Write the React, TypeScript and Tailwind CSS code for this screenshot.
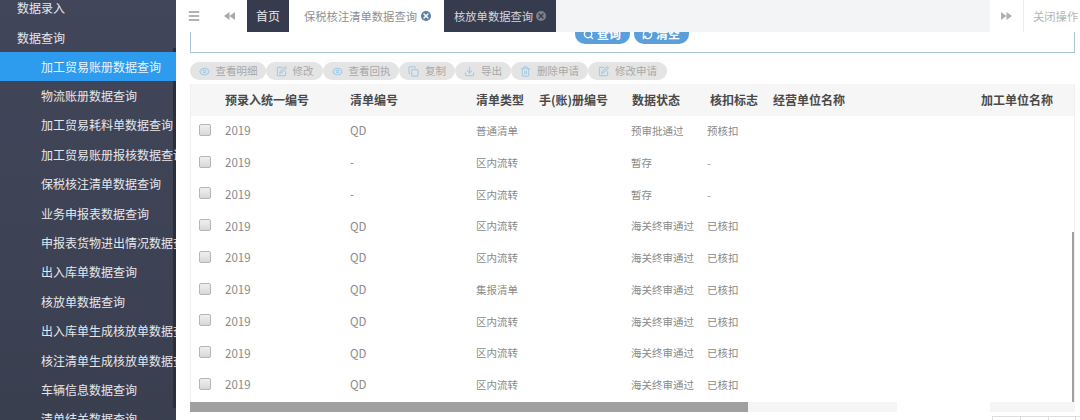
import { Copy, Download, Eye, Menu, RefreshCw, Search, SquarePen, Trash2, X } from "lucide-react";

const menu = [
  "加工贸易账册数据查询",
  "物流账册数据查询",
  "加工贸易耗料单数据查询",
  "加工贸易账册报核数据查询",
  "保税核注清单数据查询",
  "业务申报表数据查询",
  "申报表货物进出情况数据查询",
  "出入库单数据查询",
  "核放单数据查询",
  "出入库单生成核放单数据查询",
  "核注清单生成核放单数据查询",
  "车辆信息数据查询",
  "清单结关数据查询",
];

const tools = [
  { label: "查看明细", icon: Eye, w: "w-[76px]" },
  { label: "修改", icon: SquarePen, w: "w-[57px]" },
  { label: "查看回执", icon: Eye, w: "w-[76px]" },
  { label: "复制", icon: Copy, w: "w-[56px]" },
  { label: "导出", icon: Download, w: "w-[56px]" },
  { label: "删除申请", icon: Trash2, w: "w-[77px]" },
  { label: "修改申请", icon: SquarePen, w: "w-[79px]" },
];

const rows = [
  ["QD", "普通清单", "预审批通过", "预核扣"],
  ["-", "区内流转", "暂存", "-"],
  ["-", "区内流转", "暂存", "-"],
  ["QD", "区内流转", "海关终审通过", "已核扣"],
  ["QD", "区内流转", "海关终审通过", "已核扣"],
  ["QD", "集报清单", "海关终审通过", "已核扣"],
  ["QD", "区内流转", "海关终审通过", "已核扣"],
  ["QD", "区内流转", "海关终审通过", "已核扣"],
  ["QD", "区内流转", "海关终审通过", "已核扣"],
];

function Sidebar() {
  return (
    <aside className="relative w-[176px] h-[420px] shrink-0 overflow-hidden bg-gradient-to-b from-[#41465a] to-[#3a3f50] text-[12px] text-[#e6e7ea]">
      {/* thin scrollbar, the active row covers it */}
      <div className="absolute right-0 top-[48px] h-[360px] w-[3px] bg-[#2c2f3a]" />
      <div className="relative -mt-[7px]">
        <div className="h-[30px] pl-[17px] flex items-center whitespace-nowrap">数据录入</div>
        <div className="h-[29px] pl-[17px] flex items-center whitespace-nowrap">数据查询</div>
        {menu.map((item, i) => (
          <div
            key={item}
            className={`h-[29.4px] pl-[41px] flex items-center whitespace-nowrap ${i === 0 ? "bg-[#2d9bee] text-[#e8f4fd]" : ""}`}
          >
            {item}
          </div>
        ))}
      </div>
    </aside>
  );
}

function TabBar() {
  return (
    <div className="h-[32px] flex text-[11.3px] bg-white">
      <div className="w-[71px] flex items-center text-[#9a9a9a]">
        <Menu size={14} strokeWidth={2.5} className="ml-[11px]" />
        <svg viewBox="0 0 11 8" className="ml-[23px] w-[11px] h-[8px] text-[#a8a8a8]" fill="currentColor">
          <path d="M5.5 0v8L0 4zM11 0v8L5.5 4z" />
        </svg>
      </div>
      <div className="w-[42px] bg-[#363c4e] text-[12px] text-[#e8e9ec] flex items-center justify-center">首页</div>
      <div className="w-[155px] flex items-center pl-[15px] gap-[4px] text-[#8f8f8f] whitespace-nowrap">
        保税核注清单数据查询
        <span className="w-[10px] h-[10px] rounded-full bg-[#5d7fa6] flex items-center justify-center">
          <X size={8} strokeWidth={4} className="text-white" />
        </span>
      </div>
      <div className="w-[112px] bg-[#363c4e] text-[#d5d7dc] flex items-center pl-[10px] gap-[3px] whitespace-nowrap">
        核放单数据查询
        <span className="w-[10px] h-[10px] rounded-full bg-[#7b808c] flex items-center justify-center">
          <X size={8} strokeWidth={4} className="text-[#363c4e]" />
        </span>
      </div>
      <div className="w-[434px] bg-[#f3f4f6]" />
      <div className="w-[34px] flex items-center justify-center border-r border-[#eeeeee]">
        <svg viewBox="0 0 11 8" className="w-[11px] h-[8px] text-[#b0b0b0]" fill="currentColor">
          <path d="M0 0v8l5.5-4zM5.5 0v8L11 4z" />
        </svg>
      </div>
      <div className="flex-1 overflow-hidden pl-[9px] flex items-center text-[#b5b5b5] whitespace-nowrap">关闭操作</div>
    </div>
  );
}

function SearchPanel() {
  return (
    <div className="ml-[14px] mr-[5px] h-[21px] overflow-hidden border-x border-b border-[#a9c8d8] flex items-end justify-center gap-[4px] pb-[8px] pr-[2px] text-[12px] font-bold text-white">
      <div className="w-[55px] h-[20px] shrink-0 rounded-full bg-[#5a9fdc] flex items-center justify-center gap-[3px]">
        <Search size={11} strokeWidth={3} />
        查询
      </div>
      <div className="w-[55px] h-[20px] shrink-0 rounded-full bg-[#5a9fdc] flex items-center justify-center gap-[3px]">
        <RefreshCw size={11} strokeWidth={3} />
        清空
      </div>
    </div>
  );
}

function Toolbar() {
  return (
    <div className="ml-[14px] mt-[9px] h-[18px] flex text-[10.5px] text-[#a8a8a8]">
      {tools.map((t) => (
        <div key={t.label} className={`${t.w} h-[18px] rounded-full bg-[#e4e4e4] flex items-center justify-center gap-[6px] whitespace-nowrap`}>
          <t.icon size={11} strokeWidth={2.5} className="text-[#a5cde8]" />
          {t.label}
        </div>
      ))}
    </div>
  );
}

function Row({ cells }: { cells: string[] }) {
  return (
    <div className="h-[31.75px] pb-[2px] flex items-center text-[10.5px] text-[#8a8a8a] whitespace-nowrap">
      <div className="w-[34px] pl-[8px] -mt-[2px]">
        <div className="w-[12px] h-[12px] rounded-[2px] border border-[#b5b5b5] bg-gradient-to-b from-[#f0f0f0] to-[#d8d8d8]" />
      </div>
      <div className="w-[125px] text-[11.5px]">2019</div>
      <div className="w-[126px] text-[11.5px]">{cells[0]}</div>
      <div className="w-[155px]">{cells[1]}</div>
      <div className="w-[76px]">{cells[2]}</div>
      <div>{cells[3]}</div>
    </div>
  );
}

function DataTable() {
  return (
    <div className="relative ml-[14px] mr-[5px] mt-[4px] h-[318px] border-x border-[#f0f0f0]">
      <div className="h-[32px] flex items-center bg-[#f6f6f7] text-[12px] font-bold text-[#4a4a4a] whitespace-nowrap">
        <div className="w-[34px]" />
        <div className="w-[125px]">预录入统一编号</div>
        <div className="w-[126px]">清单编号</div>
        <div className="w-[63px]">清单类型</div>
        <div className="w-[93px]">手(账)册编号</div>
        <div className="w-[78px]">数据状态</div>
        <div className="w-[63px]">核扣标志</div>
        <div className="w-[208px]">经营单位名称</div>
        <div>加工单位名称</div>
      </div>
      {rows.map((r, i) => (
        <Row key={i} cells={r} />
      ))}
      {/* vertical scrollbar thumb */}
      <div className="absolute right-0 top-[148px] h-[170px] w-[2px] bg-[#a0a0a0]" />
    </div>
  );
}

function BottomBar() {
  return (
    <div className="ml-[14px] mr-[5px] h-[10px] flex">
      <div className="w-[558px] bg-[#a0a0a0]" />
      <div className="w-[149px] bg-[#f5f5f5]" />
      <div className="w-[93px]" />
      <div className="flex-1 bg-[#f5f5f5]" />
    </div>
  );
}

export default function App() {
  return (
    <div className="w-[1080px] h-[420px] flex overflow-hidden bg-white font-['Noto_Sans_CJK_SC','Liberation_Sans',sans-serif]">
      <Sidebar />
      <main className="flex-1 min-w-0">
        <TabBar />
        <SearchPanel />
        <Toolbar />
        <DataTable />
        <BottomBar />
        <div className="ml-[816px] mt-[4px] h-[6px] flex border-t border-l border-[#dddddd]">
          <div className="w-[28px] border-r border-[#dddddd]" />
          <div className="w-[28px] border-r border-[#dddddd]" />
          <div className="w-[27px] border-r border-[#dddddd]" />
        </div>
      </main>
    </div>
  );
}
